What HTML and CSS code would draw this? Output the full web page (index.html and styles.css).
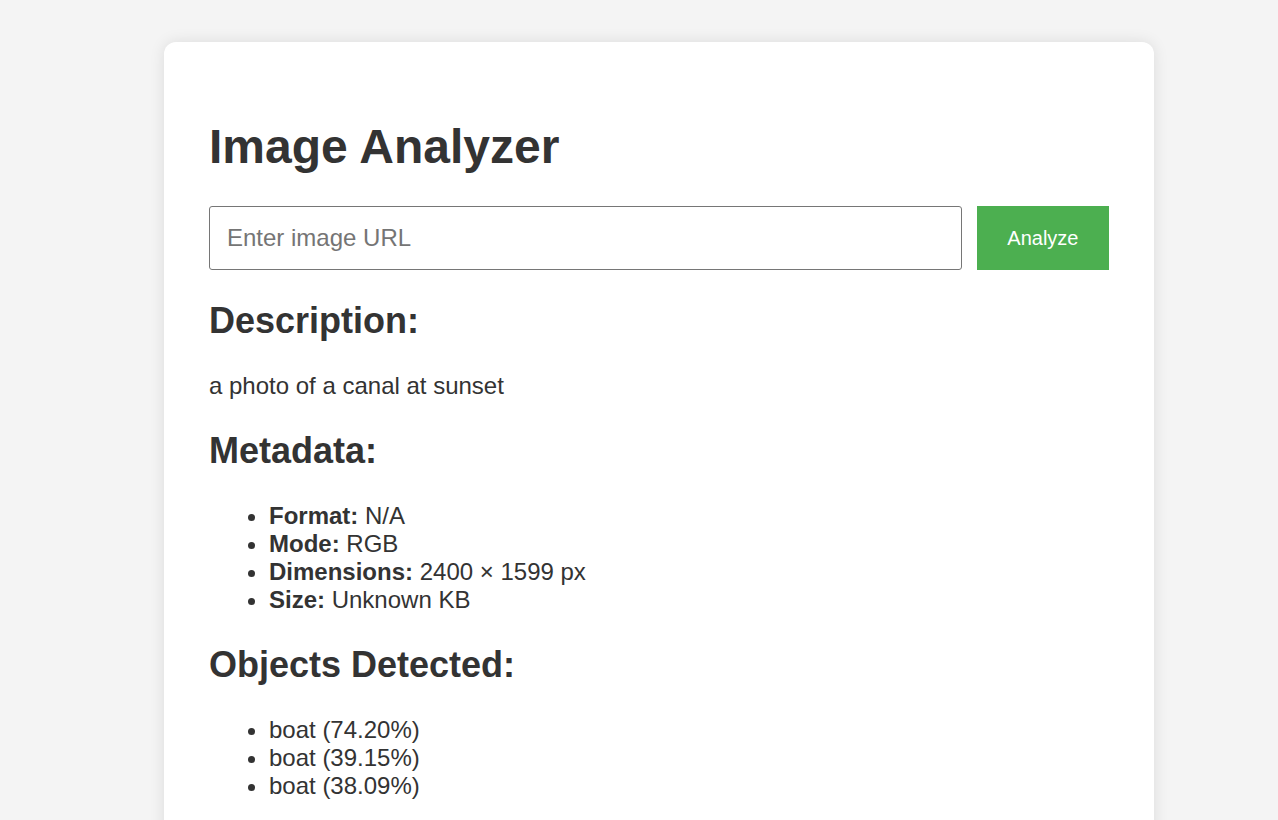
FILE: index.html
```html
<!DOCTYPE html>
<html lang="en">
<head>
<meta charset="utf-8">
<title>Image Analyzer</title>
<link rel="stylesheet" href="styles.css">
</head>
<body>
<div class="card">
  <h1 class="title">Image Analyzer</h1>
  <div class="form">
    <input class="url-input" type="text" placeholder="Enter image URL">
    <button class="analyze-btn" type="button">Analyze</button>
  </div>
  <h2 class="section-title">Description:</h2>
  <p class="text">a photo of a canal at sunset</p>
  <h2 class="section-title">Metadata:</h2>
  <ul class="list">
    <li><strong>Format:</strong> N/A</li>
    <li><strong>Mode:</strong> RGB</li>
    <li><strong>Dimensions:</strong> 2400 × 1599 px</li>
    <li><strong>Size:</strong> Unknown KB</li>
  </ul>
  <h2 class="section-title">Objects Detected:</h2>
  <ul class="list">
    <li>boat (74.20%)</li>
    <li>boat (39.15%)</li>
    <li>boat (38.09%)</li>
  </ul>
</div>
</body>
</html>
```

FILE: styles.css
```css
html, body {
  margin: 0;
  padding: 0;
  background: #f4f4f4;
}

body {
  font-family: "Liberation Sans", Arial, sans-serif;
  font-size: 24px;
  color: #333;
  padding: 42px 0 0 164px;
}

.card {
  width: 900px;
  padding: 45px;
  background: #fff;
  border-radius: 12px;
  box-shadow: 0 0 15px rgba(0, 0, 0, 0.1);
}

.title {
  font-size: 48px;
  font-weight: bold;
  margin: 32px 0;
}

.form {
  display: flex;
  gap: 15px;
}

.url-input {
  flex: 1;
  font-family: "Liberation Sans", Arial, sans-serif;
  font-size: 24px;
  color: #333;
  padding: 17px 17px;
  border: 1px solid #767676;
  border-radius: 3px;
  outline: none;
  margin: 0;
}

.url-input::placeholder {
  color: #757575;
}

.analyze-btn {
  font-family: "Liberation Sans", Arial, sans-serif;
  font-size: 20px;
  color: #fff;
  background: #4caf50;
  border: none;
  padding: 15px 30.5px;
  margin: 0;
  cursor: pointer;
}

.section-title {
  font-size: 36px;
  font-weight: bold;
  margin: 30px 0;
}

.text {
  margin: 24px 0;
}

.list {
  margin: 24px 0;
  padding-left: 60px;
}
```
